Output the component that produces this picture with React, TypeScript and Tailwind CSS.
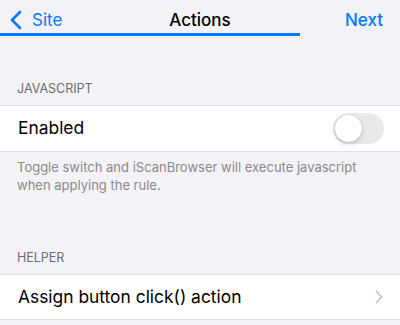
import { useState } from "react";

const font = { fontFamily: 'Inter, "Noto Sans", sans-serif' };

function Toggle({ on, onChange }: { on: boolean; onChange: (v: boolean) => void }) {
  return (
    <button
      onClick={() => onChange(!on)}
      className={`relative h-[31px] w-[51px] rounded-full transition-colors ${on ? "bg-[#34c759]" : "bg-[#e9e9eb]"}`}
    >
      <span
        className={`absolute top-[2px] h-[27px] w-[27px] rounded-full bg-white shadow-[0_2px_5px_rgba(0,0,0,0.18),0_0_1px_rgba(0,0,0,0.2)] transition-all ${
          on ? "left-[22px]" : "left-[2px]"
        }`}
      />
    </button>
  );
}

export default function App() {
  const [jsOn, setJsOn] = useState(false);

  return (
    <div className="h-[325px] w-full overflow-hidden bg-[#f2f2f7] text-black" style={font}>
      {/* nav bar */}
      <header className="relative flex h-[33px] items-center justify-between pl-[9px] pr-[17px] pt-[7px] leading-[24px]">
        <button className="flex items-center gap-[10px] text-[#007aff]">
          <svg width="13" height="20" viewBox="0 0 13 20" fill="none">
            <path d="M11 2 L3 10 L11 18" stroke="#007aff" strokeWidth="2.6" strokeLinecap="round" strokeLinejoin="round" />
          </svg>
          <span className="text-[17px]">Site</span>
        </button>
        <h1 className="absolute inset-x-0 top-[8px] text-center text-[17px] font-medium">Actions</h1>
        <button className="text-[17px] font-medium text-[#007aff]">Next</button>
      </header>
      <div className="h-[3px] w-[300px] bg-[#007aff]" />

      {/* javascript section */}
      <div className="flex h-[69px] items-end px-[17px] pb-[8px] text-[12.5px] leading-[16px] text-[#6d6d72]">
        JAVASCRIPT
      </div>
      <div className="flex h-[47px] items-center justify-between border-y border-[#dedee3] bg-white pl-[18px] pr-[16px]">
        <span className="text-[17.4px]">Enabled</span>
        <Toggle on={jsOn} onChange={setJsOn} />
      </div>
      <p className="px-[17px] pt-[6px] text-[13px] leading-[18px] text-[#8a8a8e]">
        Toggle switch and iScanBrowser will execute javascript when applying the rule.
      </p>

      {/* helper section */}
      <div className="flex h-[80px] items-end px-[17px] pb-[8px] text-[12.5px] leading-[16px] text-[#6d6d72]">
        HELPER
      </div>
      <button className="flex h-[46px] w-full items-center justify-between border-y border-[#dedee3] bg-white pl-[18px] pr-[17px] text-left">
        <span className="text-[17.4px]">Assign button click() action</span>
        <svg width="8" height="14" viewBox="0 0 8 14" fill="none">
          <path d="M1.5 1.5 L6.5 7 L1.5 12.5" stroke="#c4c4c7" strokeWidth="1.8" strokeLinecap="round" strokeLinejoin="round" />
        </svg>
      </button>
    </div>
  );
}
